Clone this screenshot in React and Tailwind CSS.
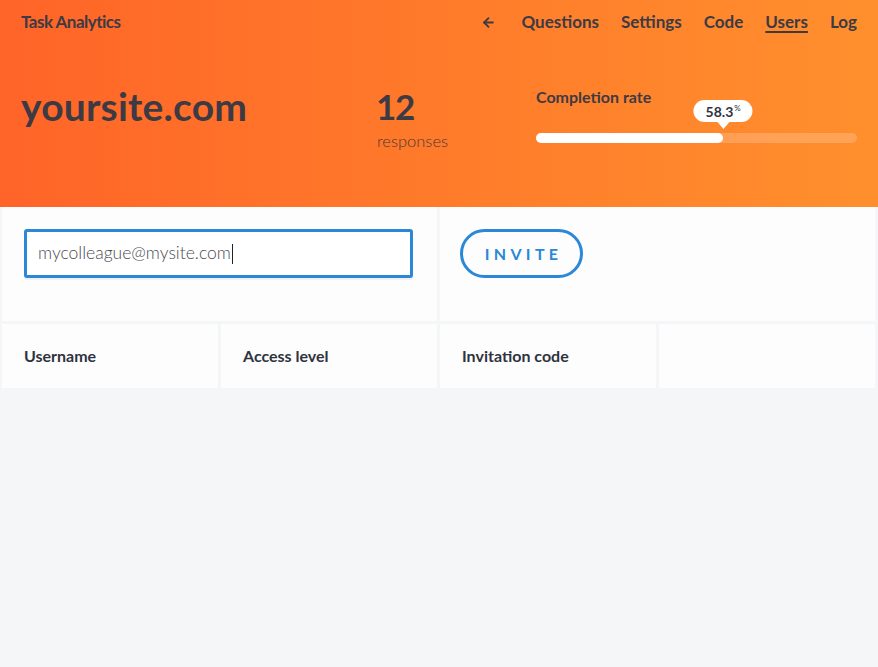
import React from 'react';
import { ArrowLeft } from 'lucide-react';

const font = { fontFamily: 'Lato, "Noto Sans", sans-serif' };

function NavLink({ children, active = false }) {
  return (
    <a
      href="#"
      className={`text-[17px] font-bold text-[#3d3a44] ${active ? 'underline underline-offset-[3px] decoration-[2px]' : ''}`}
    >
      {children}
    </a>
  );
}

// Orange banner with site name, responses and the completion bar
function Header() {
  const rate = 58.3;
  return (
    <header className="h-[207px] bg-gradient-to-r from-[#ff6428] to-[#ff8f2d] px-[21px] text-[#3d3a44]">
      <nav className="flex h-[44px] items-center justify-between">
        <span className="text-[17px] font-bold tracking-[-0.03em]">Task Analytics</span>
        <div className="flex items-center gap-[22px]">
          <ArrowLeft size={15} strokeWidth={3} className="mr-[3px]" />
          <NavLink>Questions</NavLink>
          <NavLink>Settings</NavLink>
          <NavLink>Code</NavLink>
          <NavLink active>Users</NavLink>
          <NavLink>Log</NavLink>
        </div>
      </nav>
      <div className="flex pt-[40px]">
        <h1 className="w-[355px] text-[39px] leading-[44px] font-bold tracking-[0.005em]">yoursite.com</h1>
        <div className="w-[160px]">
          <div className="text-[35px] leading-[44px] font-bold tracking-[-0.04em]">12</div>
          <div className="mt-[1px] pl-[1px] text-[16.5px] font-light text-[#4a3a36]">responses</div>
        </div>
        <div className="flex-1 pt-[1px]">
          <div className="text-[16px] font-bold">Completion rate</div>
          <div className="relative mt-[24px] h-[10px] rounded-full bg-white/20">
            <div className="h-full rounded-full bg-white" style={{ width: `${rate}%` }} />
            <div
              className="absolute bottom-[21px] -translate-x-1/2"
              style={{ left: `${rate}%` }}
            >
              <div className="relative flex h-[22px] items-center rounded-full bg-white px-[12px] text-[14px] font-bold text-[#2f3340]">
                58.3<span className="ml-[1px] -mt-[6px] text-[8px] font-normal">%</span>
                <div className="absolute left-1/2 top-full h-0 w-0 -translate-x-1/2 border-x-[6px] border-t-[7px] border-x-transparent border-t-white" />
              </div>
            </div>
          </div>
        </div>
      </div>
    </header>
  );
}

function InviteRow() {
  return (
    <div className="grid grid-cols-2 gap-[3px]">
      <div className="h-[114px] bg-[#fdfdfd] px-[22px] pt-[22px]">
        <div className="flex h-[49px] w-[389px] items-center rounded-[3px] border-[3px] border-[#2b87d7] bg-white px-[11px] text-[17.5px] font-light text-[#4a4a52] shadow-[0_2px_0_#eef0f3]">
          mycolleague@mysite.com
          <span className="ml-[1px] h-[20px] w-[1px] bg-[#222]" />
        </div>
      </div>
      <div className="h-[114px] bg-[#fdfdfd] px-[20px] pt-[22px]">
        <button className="flex h-[49px] w-[123px] items-center justify-center rounded-full border-[3px] border-[#2b87d7] pl-[4px] text-[16px] font-bold tracking-[0.27em] text-[#2b87d7]">
          INVITE
        </button>
      </div>
    </div>
  );
}

function UserTableHead() {
  const cols = ['Username', 'Access level', 'Invitation code', ''];
  return (
    <div className="grid grid-cols-4 gap-[3px]">
      {cols.map((c, i) => (
        <div key={i} className="flex h-[64px] items-center bg-[#fdfdfd] px-[22px] text-[16px] font-bold text-[#2f3340]">
          {c}
        </div>
      ))}
    </div>
  );
}

export default function App() {
  return (
    <div style={font} className="min-h-[667px] bg-[#f5f6f8]">
      <Header />
      <div className="flex flex-col gap-[3px] pl-[2px] pr-[3px]">
        <InviteRow />
        <UserTableHead />
      </div>
    </div>
  );
}
